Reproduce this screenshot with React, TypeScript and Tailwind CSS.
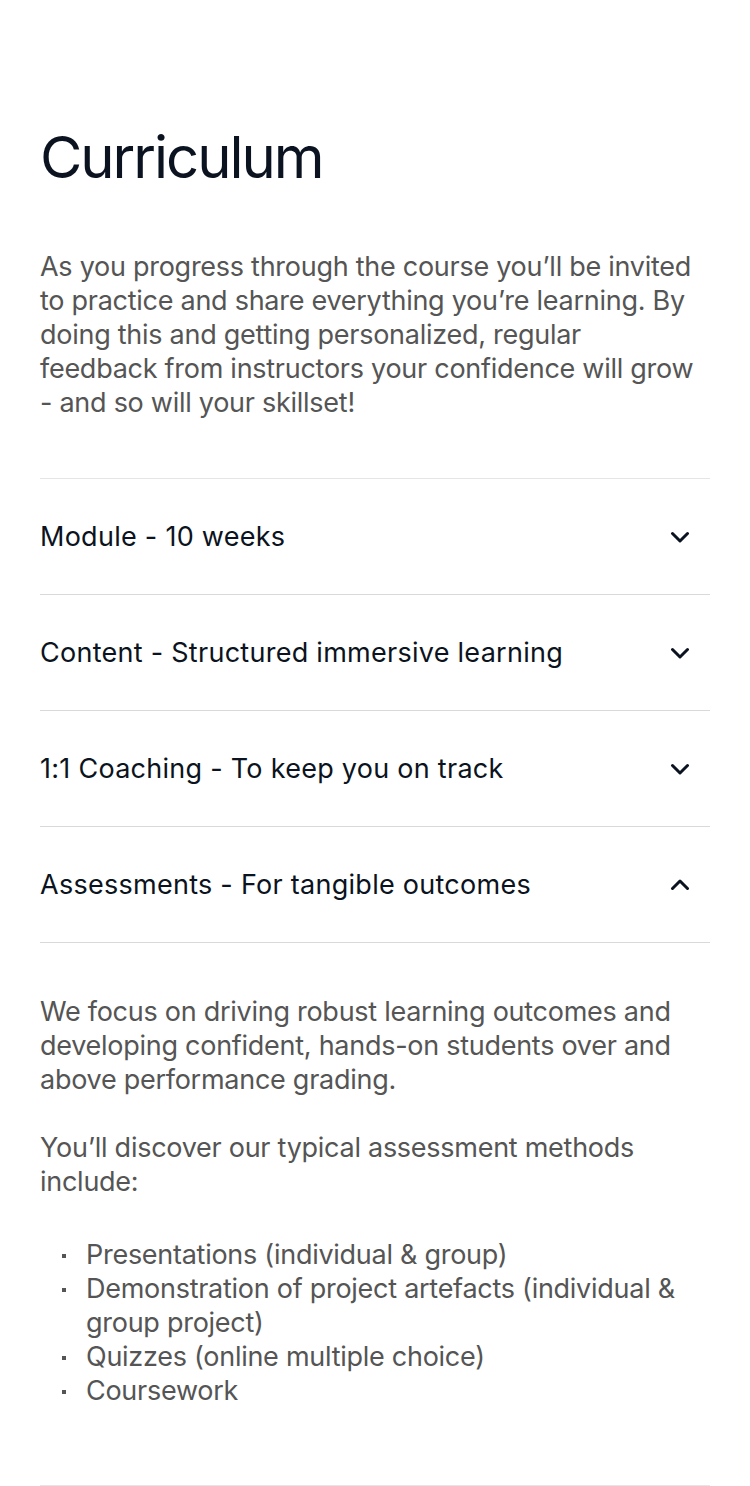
import { useState } from 'react';

const items = [
  { title: 'Module - 10 weeks' },
  { title: 'Content - Structured immersive learning' },
  { title: '1:1 Coaching - To keep you on track' },
  { title: 'Assessments - For tangible outcomes' },
];

function Chevron({ open }: { open: boolean }) {
  return (
    <svg
      width="20"
      height="12"
      viewBox="0 0 20 12"
      fill="none"
      stroke="#0b1320"
      strokeWidth="3"
      strokeLinecap="round"
      strokeLinejoin="round"
      className={open ? 'rotate-180' : ''}
    >
      <path d="M2.5 2.5l7.5 7.5 7.5-7.5" />
    </svg>
  );
}

export default function App() {
  const [openIndex, setOpenIndex] = useState<number>(3);

  return (
    <div className="min-h-screen bg-white px-10 pt-[118px] font-['Inter',sans-serif]">
      <h1 className="text-[58px] leading-[78px] tracking-[-0.035em] text-[#0b1320]">Curriculum</h1>

      <p className="mt-[54px] pr-2 text-[27px] leading-[34px] tracking-[-0.01em] text-[#555555]">
        As you progress through the course you’ll be invited to practice and share everything you’re
        learning. By doing this and getting personalized, regular feedback from instructors your
        confidence will grow - and so will your skillset!
      </p>

      <div className="mt-[58px] border-t border-[#e5e5e5]">
        {items.map((item, index) => {
          const open = openIndex === index;
          return (
            <div key={item.title} className="border-b border-[#d9d9d9]">
              <button
                type="button"
                onClick={() => setOpenIndex(open ? -1 : index)}
                className="flex h-[115px] w-full items-center justify-between pr-5 text-left"
              >
                <span className="text-[27px] leading-[34px] tracking-[0.01em] text-[#0b1320]">
                  {item.title}
                </span>
                <Chevron open={open} />
              </button>
            </div>
          );
        })}
      </div>

      {openIndex === 3 && (
        <div className="border-b border-[#e5e5e5] pt-[52px] pb-[77px] text-[27px] leading-[34px] tracking-[-0.01em] text-[#555555]">
          <p>
            We focus on driving robust learning outcomes and developing confident, hands-on students
            over and above performance grading.
          </p>
          <p className="mt-[34px]">You’ll discover our typical assessment methods include:</p>
          <ul className="mt-[39px] pl-[46px]">
            {[
              'Presentations (individual & group)',
              'Demonstration of project artefacts (individual & group project)',
              'Quizzes (online multiple choice)',
              'Coursework',
            ].map((li) => (
              <li key={li} className="relative">
                <span className="absolute -left-6 top-[16px] h-[4px] w-[4px] bg-[#555555]" />
                {li}
              </li>
            ))}
          </ul>
        </div>
      )}
    </div>
  );
}
